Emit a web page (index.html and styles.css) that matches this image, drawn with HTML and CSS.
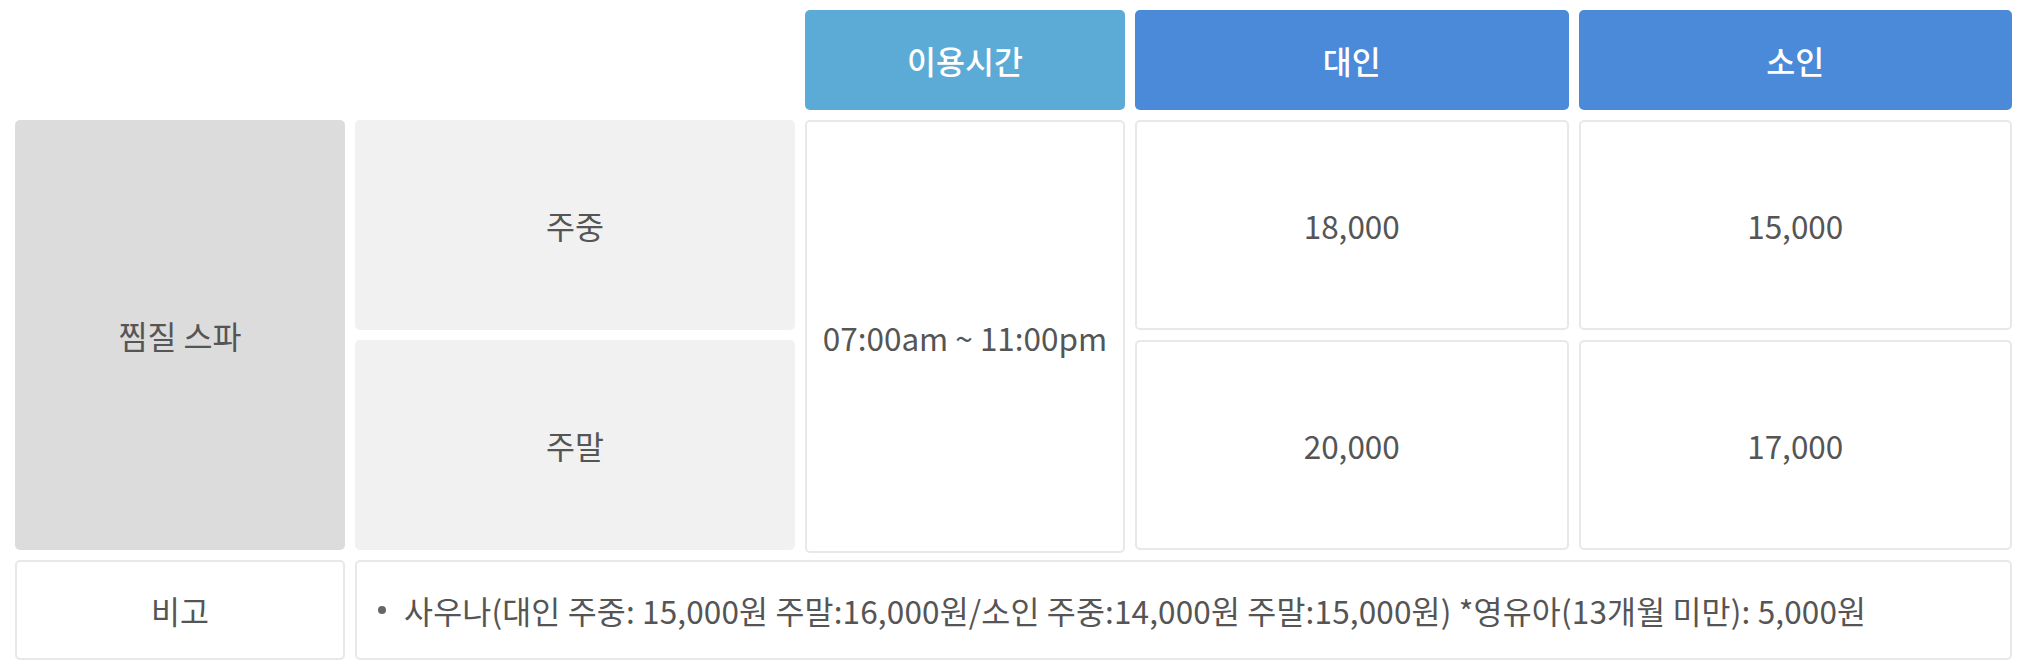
FILE: index.html
```html
<!DOCTYPE html>
<html>
<head>
<meta charset="utf-8">
<title>이용요금</title>
<link rel="stylesheet" href="styles.css">
</head>
<body>
<div class="price-table">
  <div class="blank"></div>
  <div class="blank"></div>
  <div class="head head-time">이용시간</div>
  <div class="head head-price">대인</div>
  <div class="head head-price">소인</div>

  <div class="cell cat">찜질 스파</div>
  <div class="cell day day-1">주중</div>
  <div class="cell box time">07:00am ~ 11:00pm</div>
  <div class="cell box">18,000</div>
  <div class="cell box">15,000</div>

  <div class="cell day day-2">주말</div>
  <div class="cell box">20,000</div>
  <div class="cell box">17,000</div>

  <div class="cell box note-label">비고</div>
  <div class="cell box note">
    <ul class="note-list">
      <li>사우나(대인 주중: 15,000원 주말:16,000원/소인 주중:14,000원 주말:15,000원) *영유아(13개월 미만): 5,000원</li>
    </ul>
  </div>
</div>
</body>
</html>
```
FILE: styles.css
```css
html, body {
  margin: 0;
  padding: 0;
  background: #ffffff;
}

body {
  font-family: "Noto Sans CJK KR", "Noto Sans", sans-serif;
  color: #555555;
  font-size: 31.5px;
}

.price-table {
  display: grid;
  grid-template-columns: 330px 440px 320px 1fr 1fr;
  grid-template-rows: 100px 210px 210px 100px;
  gap: 10px;
  padding: 10px 12px 0 15px;
}

.head,
.cell {
  display: flex;
  align-items: center;
  justify-content: center;
  border-radius: 5px;
  box-sizing: border-box;
  text-align: center;
}

.head {
  color: #ffffff;
  font-weight: 500;
}

.head-time {
  background: #5cabd6;
}

.head-price {
  background: #4a8ad8;
}

.cat {
  background: #dcdcdc;
  grid-row: 2 / span 2;
  grid-column: 1;
}

.day {
  background: #f1f1f1;
  grid-column: 2;
}

.day-1 { grid-row: 2; }
.day-2 { grid-row: 3; }

.box {
  background: #ffffff;
  border: 2px solid #e8e8e8;
}

.time {
  grid-row: 2 / span 2;
  grid-column: 3;
  margin-bottom: -3px;
}

.note-label {
  grid-column: 1;
}

.note {
  grid-column: 2 / span 4;
  justify-content: flex-start;
  padding-left: 17px;
}

.note-list {
  list-style: none;
  margin: 0;
  padding: 0;
  letter-spacing: 0.15px;
}

.note-list li {
  position: relative;
  padding-left: 30px;
}

.note-list li::before {
  content: "";
  position: absolute;
  left: 4px;
  top: 50%;
  width: 8px;
  height: 8px;
  margin-top: -4px;
  border-radius: 50%;
  background: #666666;
}
```
